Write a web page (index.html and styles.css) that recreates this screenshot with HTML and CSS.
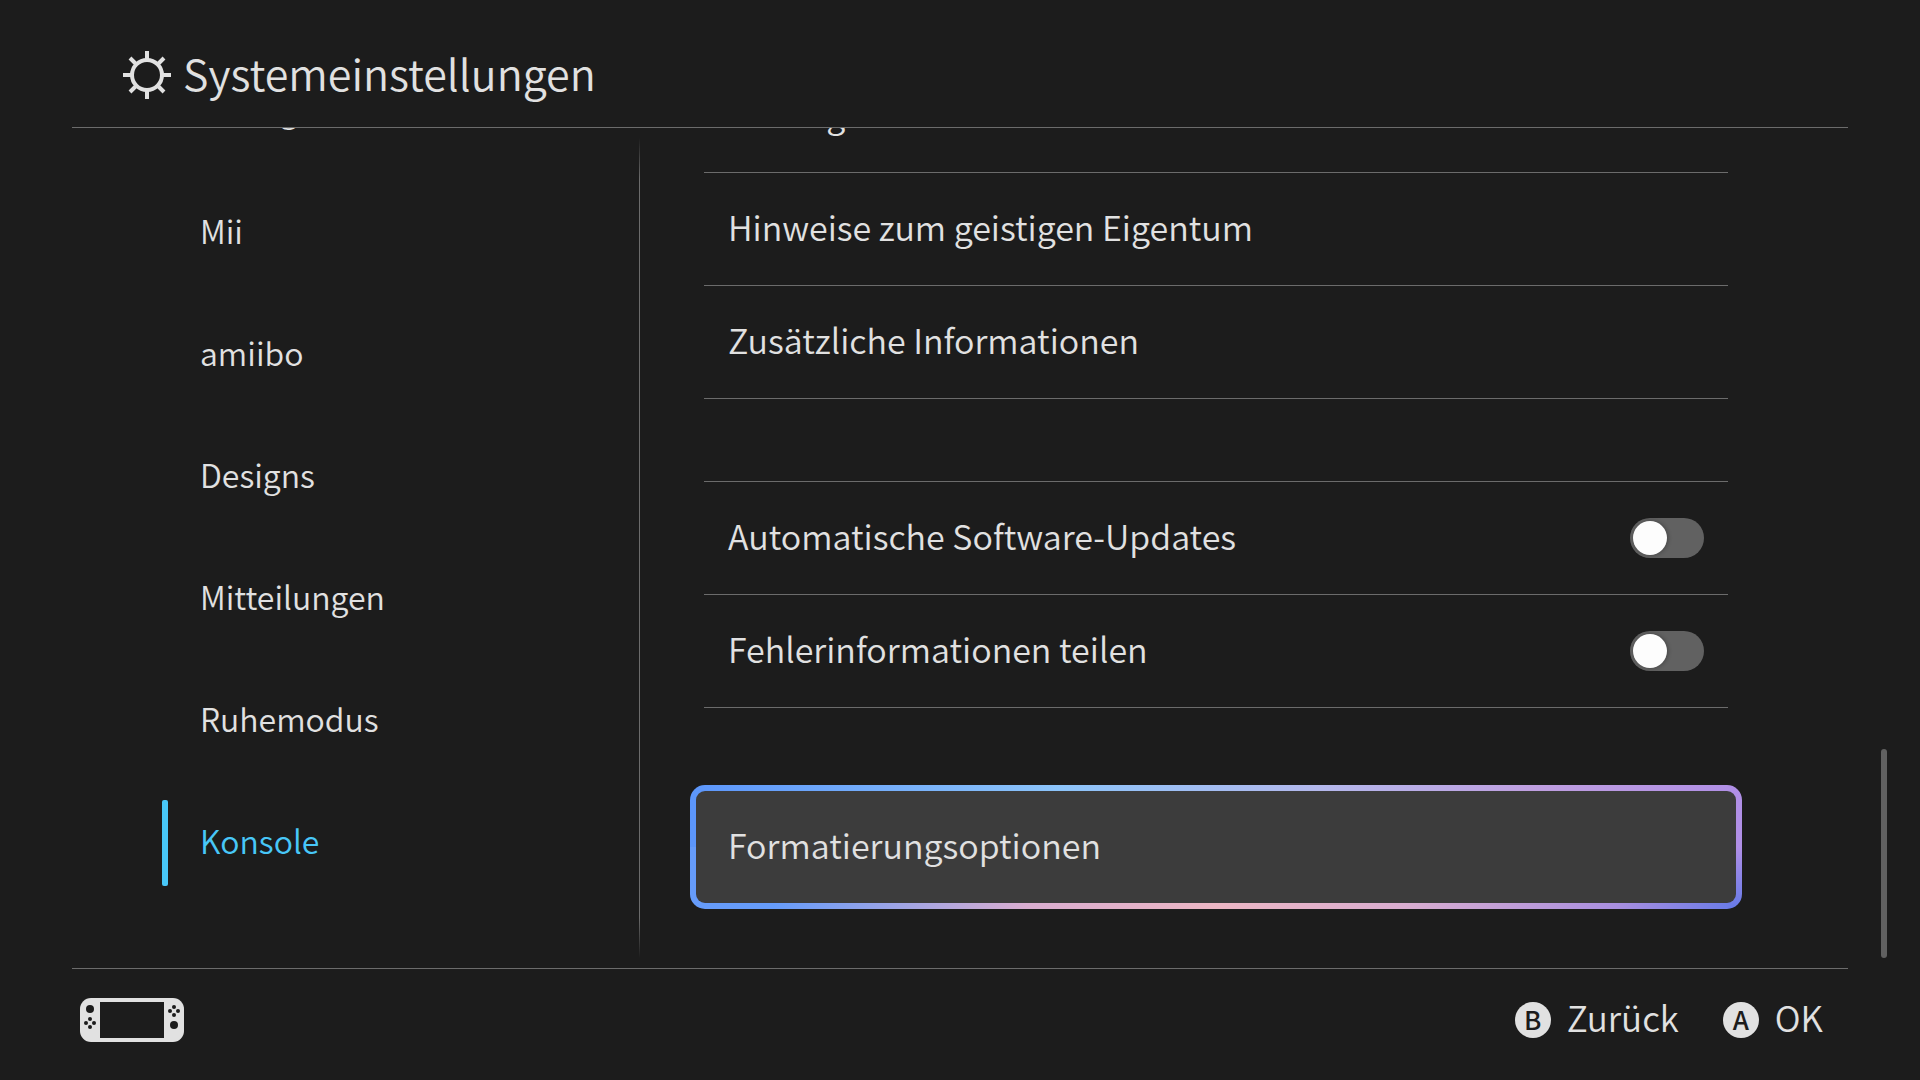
FILE: index.html
```html
<!DOCTYPE html>
<html lang="de">
<head>
  <meta charset="UTF-8">
  <meta name="viewport" content="width=device-width, initial-scale=1.0">
  <title>Systemeinstellungen</title>
  <link rel="stylesheet" href="styles.css">
</head>
<body>
  <header class="header">
    <svg class="header-icon" viewBox="0 0 48 48" aria-hidden="true">
      <g fill="none" stroke="currentColor" stroke-width="4">
        <circle cx="24" cy="24" r="15"/>
        <path d="M24 0v9M24 39v9M0 24h9M39 24h9M7 7l7 7M34 34l7 7M7 41l7-7M34 14l7-7"/>
      </g>
    </svg>
    <h1 class="label">Systemeinstellungen</h1>
  </header>

  <main class="main">
    <nav class="sidebar" aria-label="Kategorien">
      <a href="#anzeige"><span class="label">Anzeige</span></a>
      <a href="#mii"><span class="label">Mii</span></a>
      <a href="#amiibo"><span class="label">amiibo</span></a>
      <a href="#designs"><span class="label">Designs</span></a>
      <a href="#mitteilungen"><span class="label">Mitteilungen</span></a>
      <a href="#ruhemodus"><span class="label">Ruhemodus</span></a>
      <a href="#konsole" class="active" aria-current="page"><span class="label">Konsole</span></a>
    </nav>

    <section class="content" aria-label="Konsole">
      <div class="group">
        <button type="button" class="row"><span class="label">Wichtige Informationen</span></button>
        <button type="button" class="row"><span class="label">Hinweise zum geistigen Eigentum</span></button>
        <button type="button" class="row"><span class="label">Zusätzliche Informationen</span></button>
      </div>
      <div class="group">
        <label class="row">
          <span class="label">Automatische Software-Updates</span>
          <input type="checkbox" role="switch" class="toggle">
        </label>
        <label class="row">
          <span class="label">Fehlerinformationen teilen</span>
          <input type="checkbox" role="switch" class="toggle">
        </label>
      </div>
      <button type="button" class="row selected"><span class="label">Formatierungsoptionen</span></button>
    </section>

    <div class="scrollbar"></div>
  </main>

  <footer class="footer">
    <svg class="console-icon" viewBox="0 0 104 44" role="img" aria-label="Konsole im Handheld-Modus">
      <rect width="104" height="44" rx="11" fill="currentColor"/>
      <g class="cutout">
        <rect x="20" y="4" width="64" height="36"/>
        <circle cx="10" cy="11" r="4"/>
        <circle cx="10" cy="21" r="2"/>
        <circle cx="10" cy="29" r="2"/>
        <circle cx="6" cy="25" r="2"/>
        <circle cx="14" cy="25" r="2"/>
        <circle cx="94" cy="27" r="4"/>
        <circle cx="94" cy="9" r="2"/>
        <circle cx="94" cy="17" r="2"/>
        <circle cx="90" cy="13" r="2"/>
        <circle cx="98" cy="13" r="2"/>
      </g>
    </svg>
    <div class="actions">
      <button type="button" class="action"><span class="key">B</span><span class="label">Zurück</span></button>
      <button type="button" class="action"><span class="key">A</span><span class="label">OK</span></button>
    </div>
  </footer>
</body>
</html>
```
FILE: styles.css
```css
* {
  box-sizing: border-box;
}
body {
  margin: 0;
  height: 100vh;
  display: flex;
  flex-direction: column;
  overflow: hidden;
  background: #1c1c1c;
  color: #e1e1e1;
  font-family: "Noto Sans CJK JP", "Noto Sans", sans-serif;
  font-weight: 350;
}
button {
  border: none;
  background: none;
  color: inherit;
  font: inherit;
  text-align: left;
  cursor: pointer;
}
/* the font sits low in its line box, this centers the capitals */
.label {
  padding-bottom: 6px;
}

/* Header */
.header {
  display: flex;
  align-items: center;
  gap: 12px;
  flex: none;
  height: 128px;
  margin: 0 72px;
  padding: 22px 51px 0;
  border-bottom: 1px solid #6b6b6b;
}
.header-icon {
  width: 48px;
  height: 48px;
}
h1 {
  margin: 0;
  font-size: 43px;
  line-height: 60px;
  font-weight: inherit;
}

/* Main area, both lists are scrolled to the end */
.main {
  flex: 1;
  min-height: 0;
  display: flex;
  padding-right: 33px;
}
.sidebar {
  width: 639px;
  display: flex;
  flex-direction: column;
  justify-content: flex-end;
  gap: 36px;
  padding: 0 0 82px 162px;
  overflow: hidden;
}
.sidebar a {
  flex: none;
  display: flex;
  align-items: center;
  gap: 32px;
  height: 86px;
  font-size: 32px;
  color: inherit;
  text-decoration: none;
}
.sidebar a::before {
  content: "";
  width: 6px;
  height: 100%;
  border-radius: 2px;
}
.sidebar .active {
  color: #48c7f8;
}
.sidebar .active::before {
  background: #48c7f8;
}
.content {
  flex: 1;
  display: flex;
  flex-direction: column;
  justify-content: flex-end;
  padding: 0 153px 59px 65px;
  overflow: hidden;
  background: linear-gradient(transparent, #6b6b6b 5%, #6b6b6b 95%, transparent) left 50% / 1px calc(100% - 20px) no-repeat;
}
.group {
  flex: none;
  margin-bottom: 82px;
  border-top: 1px solid #6b6b6b;
}
.group + .row {
  margin-top: -5px;
}
.row {
  display: flex;
  align-items: center;
  justify-content: space-between;
  width: 100%;
  height: 113px;
  padding: 0 24px;
  font-size: 34px;
  border-bottom: 1px solid #6b6b6b;
}
.toggle {
  appearance: none;
  width: 74px;
  height: 40px;
  margin: 0;
  padding: 3px;
  border-radius: 20px;
  background: #616161;
  cursor: pointer;
}
.toggle::before {
  content: "";
  display: block;
  width: 34px;
  height: 34px;
  border-radius: 50%;
  background: #fdfdfd;
  box-shadow: 1px 0 4px rgba(0, 0, 0, 0.3);
}
.toggle:checked {
  background: #48c7f8;
}
.toggle:checked::before {
  margin-left: auto;
}
.selected {
  flex: none;
  width: auto;
  height: 124px;
  margin: 0 -14px;
  padding: 0 32px;
  border: 6px solid transparent;
  border-radius: 15px;
  background:
    linear-gradient(#3c3c3c, #3c3c3c) padding-box,
    linear-gradient(#b08fe6 50%, #667ae8) right / 12px 100% no-repeat border-box,
    linear-gradient(90deg, #5c96fb, #8cc4fa 35%, #b4b8ec 60%, #bf9fe0 80%, #b08fe6) top / 100% 50% no-repeat border-box,
    linear-gradient(90deg, #669cfa 8%, #d9add0 32%, #ecb6c4 50%, #d9add0 68%, #a98fe0 88%, #667ae8) bottom / 100% 50% no-repeat border-box;
}
.scrollbar {
  align-self: flex-end;
  width: 6px;
  height: 209px;
  margin-bottom: 10px;
  border-radius: 3px;
  background: #616161;
}

/* Footer */
.footer {
  display: flex;
  align-items: center;
  justify-content: space-between;
  flex: none;
  height: 112px;
  margin: 0 72px;
  padding: 0 25px 10px 8px;
  border-top: 1px solid #6b6b6b;
}
.console-icon {
  width: 104px;
  height: 44px;
}
.cutout {
  fill: #1c1c1c;
}
.actions {
  display: flex;
  gap: 44px;
}
.action {
  display: flex;
  align-items: center;
  gap: 16px;
  padding: 0;
  font-size: 35px;
}
.key {
  width: 36px;
  height: 36px;
  border-radius: 50%;
  background: #e1e1e1;
  color: #1c1c1c;
  font-size: 26px;
  line-height: 34px;
  font-weight: 500;
  text-align: center;
}
```
